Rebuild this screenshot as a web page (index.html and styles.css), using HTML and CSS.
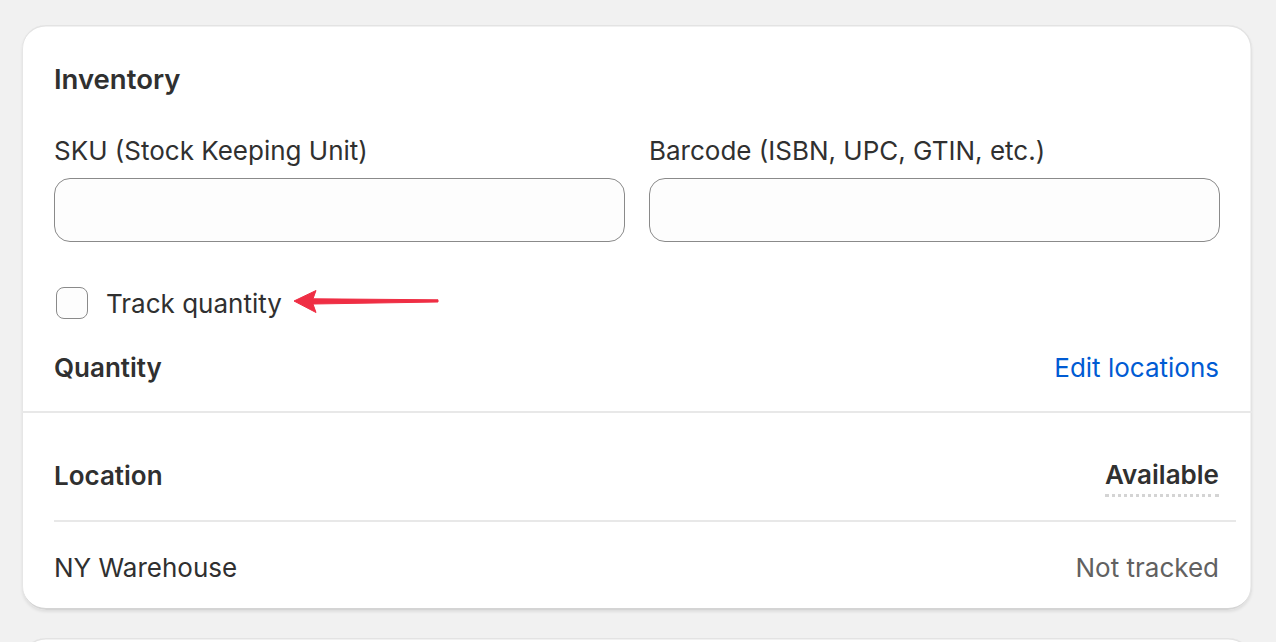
FILE: index.html
```html
<!DOCTYPE html>
<html lang="en">
<head>
<meta charset="utf-8">
<title>Inventory</title>
<link rel="stylesheet" href="styles.css">
</head>
<body>
<div class="page">
  <section class="card">
    <div class="card-top">
      <h2 class="title">Inventory</h2>
      <div class="fields">
        <div class="field">
          <label class="label">SKU (Stock Keeping Unit)</label>
          <div class="input"></div>
        </div>
        <div class="field">
          <label class="label">Barcode (ISBN, UPC, GTIN, etc.)</label>
          <div class="input"></div>
        </div>
      </div>
      <div class="check-row">
        <span class="checkbox"></span>
        <span class="check-label">Track quantity</span>
        <svg class="arrow" width="148" height="28" viewBox="0 0 148 28" aria-hidden="true">
          <path d="M2 13 L24 2.5 L21 10.8 L146 11.8 L146 14 L21 16 L24 24.5 Z" fill="#ef2e44" stroke="#ef2e44" stroke-width="1" stroke-linejoin="round"/>
        </svg>
      </div>
      <div class="qty-row">
        <span class="qty-title">Quantity</span>
        <a class="link">Edit locations</a>
      </div>
    </div>
    <div class="table">
      <div class="row head">
        <span class="cell">Location</span>
        <span class="cell right"><span class="dotted">Available</span></span>
      </div>
      <div class="row body">
        <span class="cell">NY Warehouse</span>
        <span class="cell right muted">Not tracked</span>
      </div>
    </div>
  </section>
  <section class="card next"></section>
</div>
</body>
</html>
```

FILE: styles.css
```css
* { box-sizing: border-box; }
html, body { margin: 0; padding: 0; }
body {
  background: #f1f1f1;
  font-family: Inter, "Noto Sans", "Liberation Sans", sans-serif;
  color: #303030;
  font-size: 26px;
  overflow: hidden;
}
.page {
  padding: 25px 24px 0 22px;
  display: flex;
  flex-direction: column;
  gap: 28px;
}
.card {
  background: #ffffff;
  border-radius: 24px;
  box-shadow: inset 0 1.5px 0 #e3e3e3, inset 1px 0 0 #e6e6e6, inset -1.5px 0 0 #e3e3e3, inset 0 -2px 0 #d4d4d4, 0 2px 3px rgba(0,0,0,0.08);
  display: flex;
  flex-direction: column;
}
.card.next { height: 200px; }
.card-top {
  padding: 32px 32px 24px;
  display: flex;
  flex-direction: column;
  border-bottom: 2px solid #e8e8e8;
}
.title {
  margin: 2px 0 0;
  font-size: 27.5px;
  font-weight: 600;
  line-height: 40px;
}
.fields {
  margin-top: 33px;
  display: grid;
  grid-template-columns: 1fr 1fr;
  gap: 24px;
}
.field { display: flex; flex-direction: column; }
.label {
  line-height: 38px;
  margin-bottom: 8px;
}
.input {
  height: 64px;
  border: 1.3px solid #8a8a8a;
  border-radius: 16px;
  background: #fdfdfd;
}
.check-row {
  margin-top: 41px;
  height: 40px;
  display: flex;
  align-items: center;
}
.checkbox {
  width: 32px;
  height: 32px;
  margin-left: 2px;
  border: 1.6px solid #8a8a8a;
  border-radius: 8px;
  background: #fdfdfd;
}
.check-label { margin-left: 18px; }
.arrow { margin-left: 10px; margin-top: -2px; }
.qty-row {
  margin-top: 24px;
  height: 40px;
  display: flex;
  align-items: center;
  justify-content: space-between;
  padding-right: 1px;
}
.qty-title { font-weight: 600; }
.link { color: #005bd3; text-decoration: none; }
.table {
  margin: 0 16px 0 32px;
  display: flex;
  flex-direction: column;
}
.row {
  display: flex;
  justify-content: space-between;
  align-items: center;
  height: 40px;
  box-sizing: content-box;
}
.row.head {
  padding: 42px 0 25px;
  border-bottom: 2px solid #e8e8e8;
  font-weight: 600;
}
.row.body { padding: 25px 0 23px; }
.cell.right { padding-right: 17px; }
.dotted {
  display: inline-block;
  line-height: 30px;
  margin-top: -2px;
  border-bottom: 3px dotted #d4d4d4;
  padding-bottom: 4px;
  margin-bottom: -6px;
}
.muted { color: #616161; }
```
